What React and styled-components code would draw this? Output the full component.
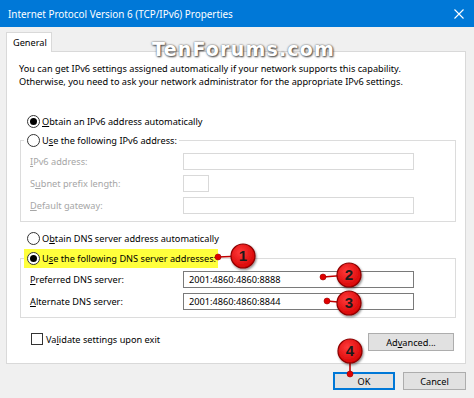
import React from 'react'
import styled, { createGlobalStyle } from 'styled-components'

const GlobalStyle = createGlobalStyle`
  html, body { margin: 0; padding: 0; background: #f0f0f0; }
  body { font-family: "Noto Sans", "DejaVu Sans", sans-serif; }
`

const Window = styled.div`
  position: relative;
  width: 474px;
  height: 398px;
  overflow: hidden;
  background: #f0f0f0;
  font-size: 9.2px;
  color: #000;
`

const TitleBar = styled.div`
  height: 27px;
  background: #0078d7;
  display: flex;
  align-items: center;
  justify-content: space-between;
  padding: 0 10px 0 8px;
  color: #fff;
  font-size: 9.9px;
`

const Body = styled.div`
  padding: 5px 8px 0 6px;
`

const TabStrip = styled.div`
  display: flex;
  height: 20px;
  margin-bottom: -1px;
  position: relative;
  z-index: 1;
`

const Tab = styled.div`
  width: 46px;
  height: 20px;
  box-sizing: border-box;
  background: #fff;
  border: 1px solid #d9d9d9;
  border-bottom: none;
  padding-left: 6px;
  display: flex;
  align-items: center;
`

const Panel = styled.div`
  height: 313px;
  box-sizing: border-box;
  background: #fff;
  border: 1px solid #d9d9d9;
  padding: 10px 0 0 12px;
`

const Desc = styled.p`
  margin: 0;
  line-height: 13px;
`

const Option = styled.label`
  display: flex;
  align-items: center;
  gap: 2px;
  height: 19px;
  margin-top: ${p => p.$top || 0}px;
  padding-left: 8px;
`

const Radio = styled.span`
  width: 13px;
  height: 13px;
  box-sizing: border-box;
  border: 1px solid #333;
  border-radius: 50%;
  background: #fff;
  display: flex;
  align-items: center;
  justify-content: center;
  &::after {
    content: '';
    width: 7px;
    height: 7px;
    border-radius: 50%;
    background: ${p => (p.$on ? '#000' : 'transparent')};
  }
`

const Group = styled.fieldset`
  width: 436px;
  box-sizing: border-box;
  margin: ${p => p.$top || 0}px 0 0 1px;
  padding: 0 0 7px 0;
  border: 1px solid #dcdcdc;
  display: grid;
  grid-template-columns: 162px 1fr;
  row-gap: 5px;
`

const Legend = styled.legend`
  display: flex;
  align-items: center;
  gap: 2px;
  height: 19px;
  margin-left: 3px;
  padding: 0 2px 0 3px;
  background: ${p => (p.$mark ? '#ffff3c' : '#fff')};
`

const FieldLabel = styled.span`
  display: flex;
  align-items: center;
  height: 17px;
  padding-left: 9px;
  color: ${p => (p.$off ? '#a6a6a6' : '#000')};
`

const Input = styled.div`
  width: ${p => p.$w || 231}px;
  height: 17px;
  box-sizing: border-box;
  border: 1px solid ${p => (p.$off ? '#d9d9d9' : '#7a7a7a')};
  background: #fff;
  padding-left: 5px;
  display: flex;
  align-items: center;
`

const FirstRow = styled.div`
  display: contents;
  & > * { margin-top: 3px; }
`

const BottomRow = styled.div`
  width: 436px;
  margin: 15px 0 0 1px;
  display: flex;
  align-items: center;
  justify-content: space-between;
`

const Check = styled.label`
  display: flex;
  align-items: center;
  gap: 3px;
  padding-left: 11px;
  margin-top: -6px;
  &::before {
    content: '';
    width: 12px;
    height: 12px;
    box-sizing: border-box;
    border: 1px solid #333;
    background: #fff;
  }
`

const Button = styled.button`
  width: ${p => p.$w}px;
  height: 18px;
  box-sizing: border-box;
  margin-right: ${p => p.$mr || 0}px;
  padding: 0;
  font: inherit;
  color: #000;
  background: #e1e1e1;
  border: ${p => (p.$default ? '2px solid #0078d7' : '1px solid #adadad')};
`

const Footer = styled.div`
  display: flex;
  justify-content: flex-end;
  gap: 8px;
  margin-top: 8px;
`

const Watermark = styled.div`
  position: absolute;
  left: 152px;
  top: 38px;
  font-family: "DejaVu Sans", sans-serif;
  font-weight: bold;
  font-size: 19px;
  letter-spacing: 1.2px;
  color: #fff;
  text-shadow: 0 0 2px #555, 1px 1px 2px #444;
  pointer-events: none;
`

const Overlay = styled.svg`
  position: absolute;
  left: 0;
  top: 0;
  pointer-events: none;
`

const Key = styled.u`
  text-decoration-thickness: 1px;
  text-underline-offset: 1px;
`

const markers = [
  { n: 1, cx: 243, cy: 256, dx: 218, dy: 257 },
  { n: 2, cx: 349, cy: 275, dx: 323, dy: 277 },
  { n: 3, cx: 349, cy: 303, dx: 327, dy: 301 },
  { n: 4, cx: 350, cy: 351, dx: 350, dy: 374 },
]

const Markers = () => (
  <Overlay width="474" height="398">
    <defs>
      <radialGradient id="rg" cx="40%" cy="35%" r="70%">
        <stop offset="0" stopColor="#ff3b3b" />
        <stop offset="1" stopColor="#d40000" />
      </radialGradient>
      <filter id="sh" x="-50%" y="-50%" width="200%" height="200%">
        <feDropShadow dx="1" dy="1.5" stdDeviation="1.2" floodColor="#000" floodOpacity="0.45" />
      </filter>
    </defs>
    {markers.map(m => (
      <g key={m.n}>
        <line x1={m.dx} y1={m.dy} x2={m.cx} y2={m.cy} stroke="#c00000" strokeWidth="1.6" />
        <circle cx={m.dx} cy={m.dy} r="3" fill="#e00000" stroke="#900" strokeWidth="0.6" />
        <circle cx={m.cx} cy={m.cy} r="12" fill="url(#rg)" stroke="#8b0000" strokeWidth="1.2" filter="url(#sh)" />
        <text x={m.cx} y={m.cy + 5} textAnchor="middle" fontFamily="Liberation Sans, Arial, sans-serif" fontWeight="bold" fontSize="15" fill="#1a1a1a">{m.n}</text>
      </g>
    ))}
  </Overlay>
)

const CloseIcon = () => (
  <svg width="10" height="10" viewBox="0 0 10 10">
    <path d="M0.5 0.5 L9.5 9.5 M9.5 0.5 L0.5 9.5" stroke="#fff" strokeWidth="1.1" />
  </svg>
)

export default function App() {
  return (
    <Window>
      <GlobalStyle />
      <TitleBar>
        <span>Internet Protocol Version 6 (TCP/IPv6) Properties</span>
        <CloseIcon />
      </TitleBar>
      <Body>
        <TabStrip>
          <Tab>General</Tab>
        </TabStrip>
        <Panel>
          <Desc>
            You can get IPv6 settings assigned automatically if your network supports this capability.
            <br />
            Otherwise, you need to ask your network administrator for the appropriate IPv6 settings.
          </Desc>

          <Option $top={24}>
            <Radio $on />
            <span><Key>O</Key>btain an IPv6 address automatically</span>
          </Option>
          <Group>
            <Legend>
              <Radio />
              <span>U<Key>s</Key>e the following IPv6 address:</span>
            </Legend>
            <FirstRow>
              <FieldLabel $off><span><Key>I</Key>Pv6 address:</span></FieldLabel>
              <Input $off />
            </FirstRow>
            <FieldLabel $off><span>S<Key>u</Key>bnet prefix length:</span></FieldLabel>
            <Input $off $w={26} />
            <FieldLabel $off><span><Key>D</Key>efault gateway:</span></FieldLabel>
            <Input $off />
          </Group>

          <Option $top={7}>
            <Radio />
            <span>O<Key>b</Key>tain DNS server address automatically</span>
          </Option>
          <Group $top={1}>
            <Legend $mark>
              <Radio $on />
              <span>U<Key>s</Key>e the following DNS server addresses:</span>
            </Legend>
            <FirstRow>
              <FieldLabel><span><Key>P</Key>referred DNS server:</span></FieldLabel>
              <Input>2001:4860:4860:8888</Input>
            </FirstRow>
            <FieldLabel><span><Key>A</Key>lternate DNS server:</span></FieldLabel>
            <Input>2001:4860:4860:8844</Input>
          </Group>

          <BottomRow>
            <Check><span>Va<Key>l</Key>idate settings upon exit</span></Check>
            <Button $w={86} $mr={2}>Ad<Key>v</Key>anced...</Button>
          </BottomRow>
        </Panel>
        <Footer>
          <Button $w={62} $default>OK</Button>
          <Button $w={63}>Cancel</Button>
        </Footer>
      </Body>
      <Watermark>TenForums.com</Watermark>
      <Markers />
    </Window>
  )
}
